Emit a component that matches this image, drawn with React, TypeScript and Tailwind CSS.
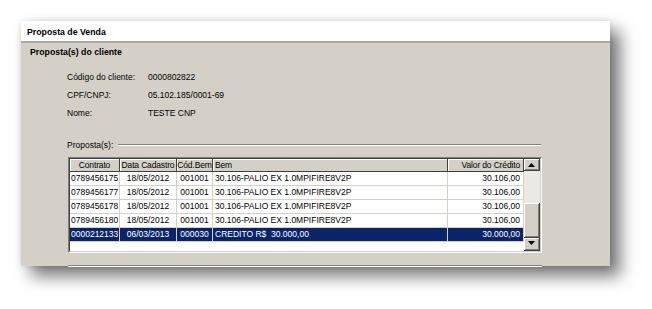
import React from "react";

const rows = [
  { c: "0789456175", d: "18/05/2012", cb: "001001", b: "30.106-PALIO EX 1.0MPIFIRE8V2P", v: "30.106,00" },
  { c: "0789456177", d: "18/05/2012", cb: "001001", b: "30.106-PALIO EX 1.0MPIFIRE8V2P", v: "30.106,00" },
  { c: "0789456178", d: "18/05/2012", cb: "001001", b: "30.106-PALIO EX 1.0MPIFIRE8V2P", v: "30.106,00" },
  { c: "0789456180", d: "18/05/2012", cb: "001001", b: "30.106-PALIO EX 1.0MPIFIRE8V2P", v: "30.106,00" },
  { c: "0000212133", d: "06/03/2013", cb: "000030", b: "CREDITO R$  30.000,00", v: "30.000,00", sel: true },
];

function Tri({ up }: { up?: boolean }) {
  return (
    <svg width="7" height="4" viewBox="0 0 7 4">
      {up ? <polygon points="0,4 7,4 3.5,0" fill="#000" /> : <polygon points="0,0 7,0 3.5,4" fill="#000" />}
    </svg>
  );
}

export default function App() {
  const hdr =
    "h-[13px] flex items-center bg-[#d4d0c8] border-r border-b border-[#404040] shadow-[inset_1px_1px_0_#ffffff] text-[8.5px] leading-none text-black whitespace-nowrap overflow-hidden tracking-[-0.15px]";
  return (
    <div className="w-[652px] h-[309px] bg-white pt-[21px] pl-[21px] font-['Liberation_Sans',Arial,sans-serif] text-black">
      <div className="w-[589px] flex flex-col shadow-[10px_10px_16px_rgba(0,0,0,0.55),0_0_6px_rgba(0,0,0,0.12)]">
        <div className="h-[20px] bg-white flex items-center pl-[6px] pt-[2px] text-[8.75px] font-bold leading-none">
          Proposta de Venda
        </div>
        <div className="h-[2px] bg-[#aba9a3]" />
        <div className="h-[223px] bg-[#d4d0c8] pl-[9px] pt-[3px] flex flex-col">
          <div className="leading-[12px] text-[8.75px] font-bold">Proposta(s) do cliente</div>
          <div className="mt-[10px] ml-[37px] grid grid-cols-[81px_1fr] text-[8.5px] leading-[18px]">
            <div>Código do cliente:</div>
            <div>0000802822</div>
            <div>CPF/CNPJ:</div>
            <div>05.102.185/0001-69</div>
            <div>Nome:</div>
            <div>TESTE CNP</div>
          </div>
          <div className="mt-[17px] ml-[37px] w-[474px] flex items-center h-[12px] text-[8.5px] leading-[12px]">
            <span>Proposta(s):</span>
            <div className="flex-1 ml-[5px] border-t border-[#808080] border-b border-b-white h-[2px]" />
          </div>
          <div className="mt-[6px] ml-[38px] w-[474px] h-[96px] border border-t-[#808080] border-l-[#808080] border-r-white border-b-white">
            <div className="w-full h-full border border-t-[#404040] border-l-[#404040] border-r-[#d4d0c8] border-b-[#d4d0c8] bg-white flex overflow-hidden">
              <div className="w-[454px] flex flex-col">
                <div className="flex">
                  <div className={`${hdr} w-[50px] justify-center`}>Contrato</div>
                  <div className={`${hdr} w-[57px] justify-center`}>Data Cadastro</div>
                  <div className={`${hdr} w-[36px] justify-center`}>Cód.Bem</div>
                  <div className={`${hdr} w-[235px] pl-[2px]`}>Bem</div>
                  <div className={`${hdr} w-[76px] justify-end pr-[3px]`}>Valor do Crédito</div>
                </div>
                {rows.map((r) => {
                  const base = r.sel
                    ? "bg-[#0a246a] text-white"
                    : "bg-white text-black";
                  const cell = `h-[14px] flex items-center border-r border-b border-[#d4d0c8] text-[8.5px] leading-none whitespace-nowrap overflow-hidden ${base}`;
                  return (
                    <div key={r.c} className="flex">
                      <div className={`${cell} w-[50px] pl-[1px]`}>{r.c}</div>
                      <div className={`${cell} w-[57px] justify-center`}>{r.d}</div>
                      <div className={`${cell} w-[36px] justify-center`}>{r.cb}</div>
                      <div className={`${cell} w-[235px] pl-[2px]`}>{r.b.replace("  ", "\u00a0\u00a0")}</div>
                      <div className={`${cell} w-[76px] justify-end pr-[3px]`}>{r.v}</div>
                    </div>
                  );
                })}
              </div>
              <div className="w-[16px] flex flex-col bg-[#ebe9e4]">
                <div className="h-[13px] bg-[#d4d0c8] border-r border-b border-[#404040] shadow-[inset_1px_1px_0_#ffffff,inset_-1px_-1px_0_#808080] flex items-center justify-center">
                  <Tri up />
                </div>
                <div className="h-[33px]" />
                <div className="h-[37px] bg-[#d4d0c8] border-r border-b border-[#404040] shadow-[inset_1px_1px_0_#ffffff,inset_-1px_-1px_0_#808080]" />
                <div className="h-[14px] bg-[#d4d0c8] border-r border-b border-[#404040] shadow-[inset_1px_1px_0_#ffffff,inset_-1px_-1px_0_#808080] flex items-start justify-center pt-[3px]">
                  <Tri />
                </div>
              </div>
            </div>
          </div>
          <div className="mt-[12px] ml-[38px] w-[474px] border-t border-[#808080] border-b border-b-white h-[2px]" />
        </div>
      </div>
    </div>
  );
}
